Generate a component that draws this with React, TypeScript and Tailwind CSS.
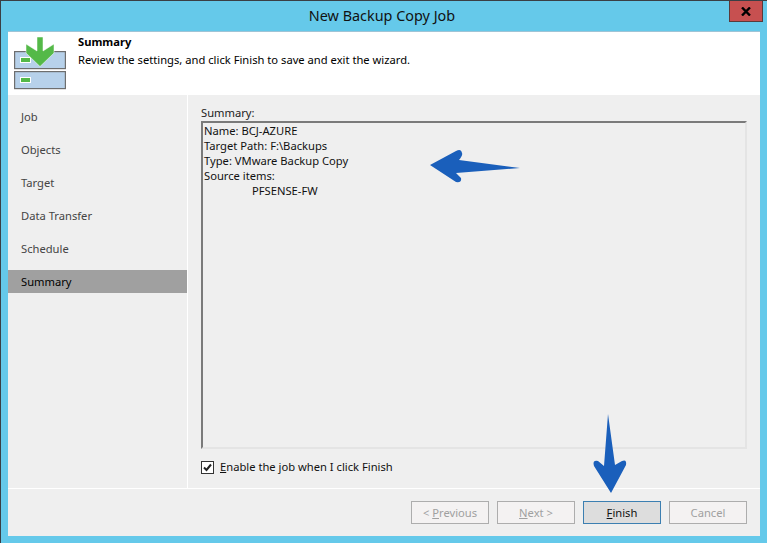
export default function App() {
  const nav = ["Job", "Objects", "Target", "Data Transfer", "Schedule"];
  return (
    <div className="relative w-[767px] h-[543px] overflow-hidden bg-[#65c9ea] border-l border-t border-[#3a3f45] font-['Noto_Sans','Open_Sans',sans-serif] text-[11.2px] text-black flex flex-col">
      <div className="relative h-[30px] shrink-0 flex items-center justify-center text-[14.4px] text-[#111] pr-[4px]">
        New Backup Copy Job
        <div className="absolute right-[4px] top-0 w-[34px] h-[21px] bg-[#c75050] border-x border-b border-[#5a3a3a] flex items-center justify-center">
          <svg width="10" height="9" viewBox="0 0 10 9"><path d="M1 0.5 L9 8.5 M9 0.5 L1 8.5" stroke="#000" strokeWidth="2.4" /></svg>
        </div>
      </div>
      <div className="ml-[7px] w-[752px] h-[505px] flex flex-col bg-[#efefef]">
        <div className="h-[64px] shrink-0 bg-white flex border-t border-[#9fc4d6]">
          <div className="w-[70px] shrink-0 pl-[6px] pt-[5px]">
            <svg width="54" height="54" viewBox="0 0 54 54">
              <rect x="0.6" y="14.6" width="50.8" height="17" fill="#b7d1ea" stroke="#6e6e6e" strokeWidth="1.2" />
              <rect x="0.6" y="34.6" width="50.8" height="17" fill="#b7d1ea" stroke="#6e6e6e" strokeWidth="1.2" />
              <rect x="6.5" y="20.5" width="10" height="5" fill="#54b948" stroke="#fff" />
              <rect x="6.5" y="40.5" width="10" height="5" fill="#54b948" stroke="#fff" />
              <path d="M23 0 H29 V14 L40 7 V16 L26 29.5 L12 16 V7 L23 14 Z" fill="#54b948" stroke="#fff" strokeWidth="0.5" />
            </svg>
          </div>
          <div className="pt-[1px] leading-[18px]">
            <div className="font-bold">Summary</div>
            <div>Review the settings, and click Finish to save and exit the wizard.</div>
          </div>
        </div>
        <div className="flex h-[394px] shrink-0 border-b border-white">
          <div className="w-[179px] shrink-0 pt-[6px] text-[#444]">
            {nav.map((n) => (
              <div key={n} className="h-[33px] flex items-center pl-[13px]">{n}</div>
            ))}
            <div className="mt-[4px] h-[23px] flex items-center pl-[13px] pt-[1px] bg-[#a0a0a0] text-black">Summary</div>
          </div>
          <div className="w-[1px] bg-white shrink-0" />
          <div className="flex-1 pl-[13px] pr-[13px] pt-[9px] flex flex-col">
            <div className="h-[17px] leading-[17px] text-[#222]">Summary:</div>
            <div className="h-[328px] border-2 border-t-[#7a7a7a] border-l-[#7a7a7a] border-r-[#e4e4e4] border-b-[#e4e4e4] pl-[1px] leading-[15px] text-[#111]">
              <div>Name: BCJ-AZURE</div>
              <div>Target Path: F:\Backups</div>
              <div>Type: VMware Backup Copy</div>
              <div>Source items:</div>
              <div className="pl-[48px]">PFSENSE-FW</div>
            </div>
            <div className="mt-[10px] flex items-center gap-[6px]">
              <div className="w-[13px] h-[13px] border border-[#333] bg-white flex items-center justify-center">
                <svg width="11" height="11" viewBox="0 0 11 11"><path d="M2 5.5 L4.5 8 L9 2.5" fill="none" stroke="#222" strokeWidth="2" /></svg>
              </div>
              <span className="text-[#111]"><u>E</u>nable the job when I click Finish</span>
            </div>
          </div>
        </div>
        <div className="flex-1 flex justify-end items-start gap-[8px] pt-[12px] pr-[13px]">
          <button className="w-[78px] h-[23px] pt-[1px] border border-[#adadad] bg-[#f4f2f2] text-[#a0a0a0]">&lt; <u>P</u>revious</button>
          <button className="w-[78px] h-[23px] pt-[1px] border border-[#adadad] bg-[#f4f2f2] text-[#a0a0a0]"><u>N</u>ext &gt;</button>
          <button className="w-[78px] h-[23px] pt-[1px] border border-[#3c7fb1] bg-[#dddddd] text-[#111]"><u>F</u>inish</button>
          <button className="w-[78px] h-[23px] pt-[1px] border border-[#adadad] bg-[#f4f2f2] text-[#a0a0a0]">Cancel</button>
        </div>
      </div>
      <svg className="absolute left-[428px] top-[147px]" width="92" height="36" viewBox="0 0 92 36">
        <path d="M1 17 L27 3 Q32 0 33 5 Q34 7 30 12 L91 20 L27 25 L32 30 Q33 35 27 34 Z" fill="#1a5fbb" />
      </svg>
      <svg className="absolute left-[589px] top-[411px]" width="38" height="82" viewBox="0 0 38 82">
        <path d="M18 2 L25 53 L32 49 Q37 47 36 53 L21 81 L4 54 Q2 48 8 49 L14 54 Z" fill="#1a5fbb" />
      </svg>
    </div>
  );
}
